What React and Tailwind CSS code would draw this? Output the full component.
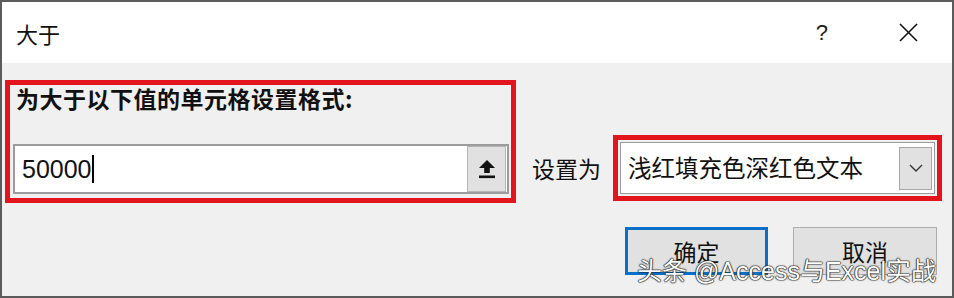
import React from 'react';

const cjk = "font-['Microsoft_YaHei','Noto_Sans_CJK_SC',sans-serif]";

const UploadIcon = () => (
  <svg width="20" height="22" viewBox="0 0 20 22">
    <path d="M10 2 L18 10 L12.8 10 L12.8 15 L7.2 15 L7.2 10 L2 10 Z" fill="#111" />
    <rect x="2" y="17.5" width="16" height="2.6" fill="#111" />
  </svg>
);

const ChevronDown = () => (
  <svg width="16" height="10" viewBox="0 0 16 10">
    <path d="M2 2 L8 8 L14 2" fill="none" stroke="#333" strokeWidth="1.4" />
  </svg>
);

const App = () => {
  return (
    <div className={`relative w-[954px] h-[298px] border-2 border-[#5b5b5b] flex flex-col ${cjk} text-[#111]`}>
      {/* title bar */}
      <div className="h-[61px] bg-white flex items-center">
        <span className="pl-[14px] text-[22px] leading-none">大于</span>
        <span className="ml-auto mr-[71px] text-[22px] leading-none font-['Liberation_Sans',sans-serif] text-[#222]">?</span>
        <svg className="mr-[34px]" width="19" height="19" viewBox="0 0 19 19">
          <path d="M1 1 L18 18 M18 1 L1 18" stroke="#111" strokeWidth="1.6" />
        </svg>
      </div>

      {/* body */}
      <div className="flex-1 bg-[#f0f0f0] flex flex-col">
        <div className="flex items-start">
          <div className="ml-[3px] mt-[17px] w-[511px] h-[123px] border-[5px] border-[#e2141c] flex flex-col">
            <div className="pl-[6px] leading-[26px] text-[23px] font-bold tracking-[0.5px]">为大于以下值的单元格设置格式:</div>
            <div className="mt-[33px] ml-[3px] mr-[2px] h-[50px] bg-white border-2 border-[#9c9c9c] flex items-center">
              <span className="pl-[7px] text-[25px] font-['Liberation_Sans',sans-serif] leading-none">50000</span>
              <span className="w-[2px] h-[28px] bg-black"></span>
              <div className="ml-auto mr-[1px] w-[39px] h-[46px] bg-[#e1e1e1] border border-[#b5b5b5] flex items-center justify-center">
                <UploadIcon />
              </div>
            </div>
          </div>

          <span className="ml-[16px] mt-[92px] text-[23px] leading-[26px]">设置为</span>

          <div className="ml-[12px] mt-[72px] w-[329px] h-[66px] border-[5px] border-[#e2141c] p-[2px]">
            <div className="h-full bg-white border border-[#9a9a9a] flex items-center">
              <span className="pl-[7px] text-[23.5px] leading-none">浅红填充色深红色文本</span>
              <div className="ml-auto mr-[2px] w-[33px] h-[43px] bg-[#e1e1e1] border border-[#a8a8a8] flex items-center justify-center">
                <ChevronDown />
              </div>
            </div>
          </div>
        </div>

        <div className="flex mt-[24px] pl-[623px]">
          <button className="w-[143px] h-[48px] bg-[#e1e1e1] border-[3px] border-[#0a6fc9] text-[23px] leading-none">确定</button>
          <button className="ml-[25px] w-[144px] h-[48px] bg-[#e1e1e1] border border-[#adadad] text-[23px] leading-none">取消</button>
        </div>
      </div>

      {/* watermark */}
      <div className="absolute left-[635px] top-[257px] text-white text-[25px] leading-none font-['Liberation_Sans','Noto_Sans_CJK_SC',sans-serif] [text-shadow:0_0_1px_#111,0_0_1px_#111,0_0_1px_#111,0_0_2px_#333]">
        头条 @Access与Excel实战
      </div>
    </div>
  );
};

export default App;
